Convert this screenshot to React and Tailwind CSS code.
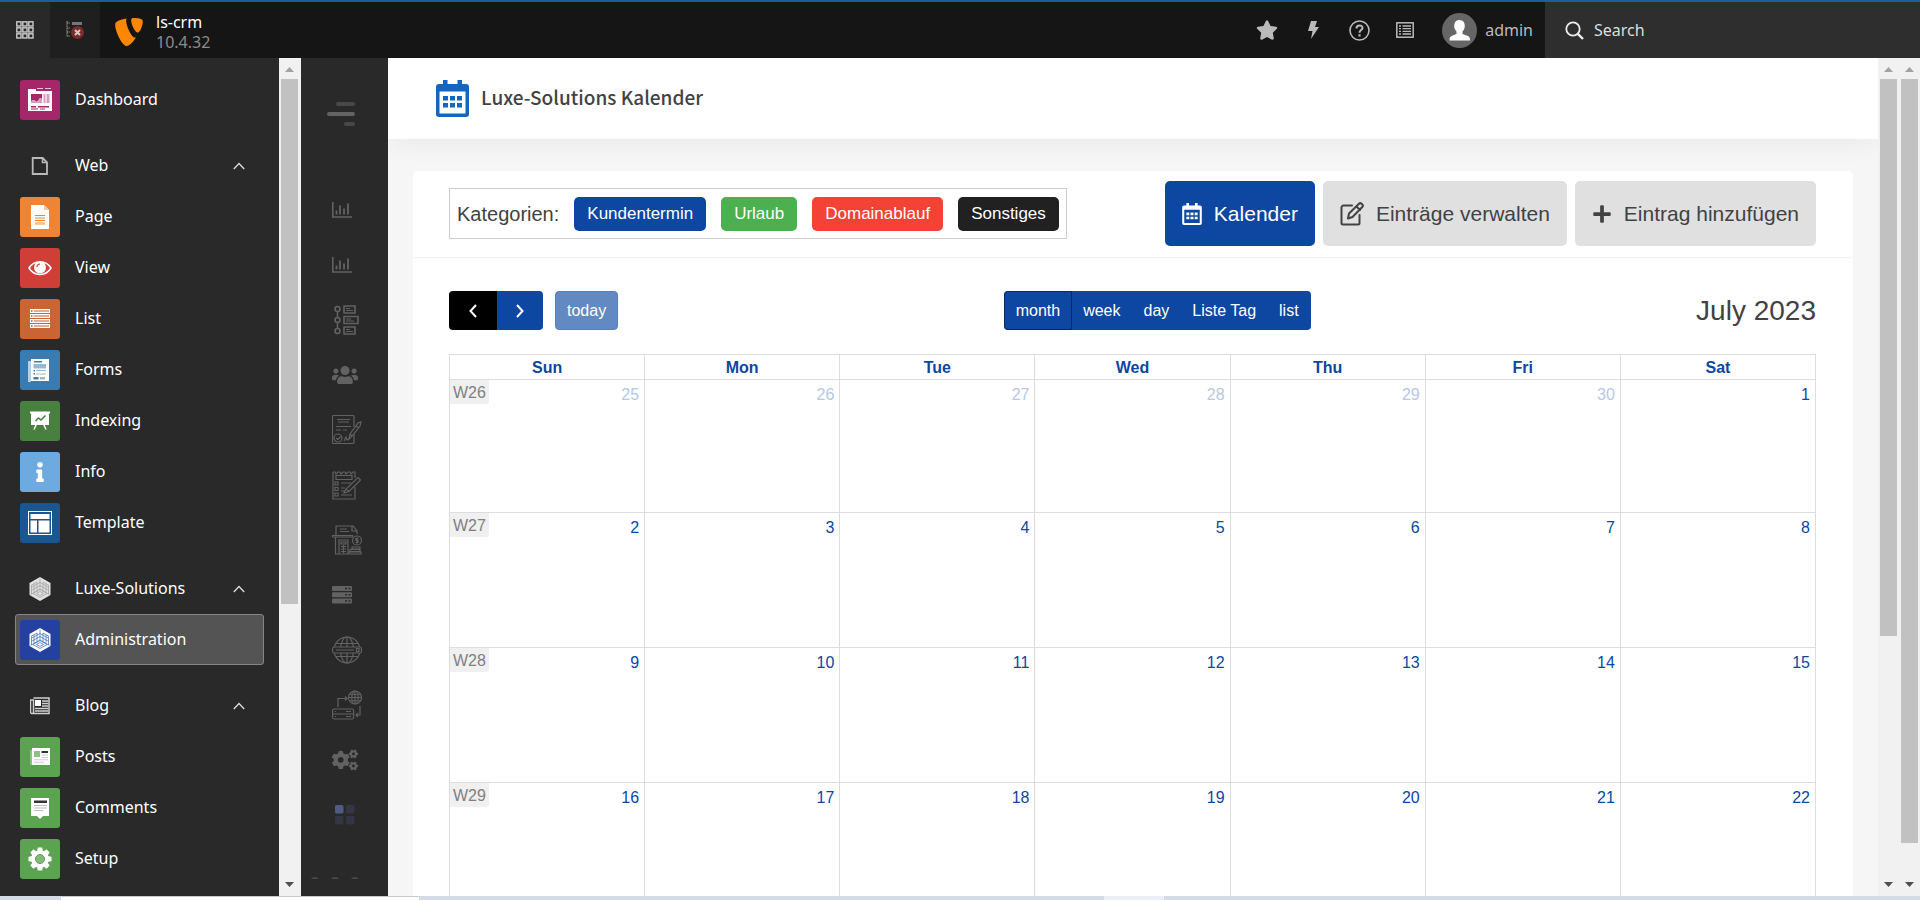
import React from "react";
import { SiTypo3 } from "react-icons/si";
import { FaUsers, FaCogs, FaStar, FaPlus, FaInfo } from "react-icons/fa";

const Tile = ({ className, children }) => (
  <span className={"flex size-10 shrink-0 items-center justify-center rounded-[3px] " + className}>{children}</span>
);

const S = ({ children, size = "size-6", box = "0 0 24 24" }) => (
  <svg className={size} viewBox={box} fill="none" aria-hidden="true">{children}</svg>
);

function DashboardIcon() {
  return (
    <S>
      <path d="M0 1h8v2h16v20H0z" fill="#fff" />
      <path d="M9 0h6v1H9zM17 0h6v1h-6z" fill="#e6bfd8" />
      <path d="M3 6h11v5l-2-1-3 4-3-2-3 1z" fill="#a4276a" />
      <path d="M3 13l3-1 3 2 3-4 2 1v4H3zM15.500 6h2v9h-2zM18.500 6h3v9h-3z" fill="#d79cc0" />
      <path d="M3 18h5v1.500H3zM10 18h11v1.500H10zM3 20.500h7v1H3zM12 20.500h5v1h-5z" fill="#a4276a" />
    </S>
  );
}
function WebIcon() {
  return (
    <S size="size-[18px]" box="0 0 18 18">
      <path d="M1.700 1h10l4.300 4.300V17H1.700z" stroke="#b9b9b9" strokeWidth="1.800" />
      <path d="M11.500 1v4.500H16" stroke="#b9b9b9" strokeWidth="1.500" />
    </S>
  );
}
function PageIcon() {
  return (
    <S>
      <path d="M3 0h13l5 5v19H3z" fill="#fff" />
      <path d="M16 0v5h5z" fill="#f8c795" />
      <path d="M7 10.500h10M7 13h10M7 15.500h10M7 18h10" stroke="#ee8434" strokeWidth="1.100" />
      <path d="M7 19.500h10" stroke="#f8c795" />
    </S>
  );
}
function ViewIcon() {
  return (
    <S>
      <path d="M1 12C6 3.500 18 3.500 23 12 18 20.500 6 20.500 1 12z" stroke="#fff" strokeWidth="1.500" />
      <circle cx="12" cy="11.500" r="6" fill="#fff" />
      <path d="M8.800 11A3.500 3.500 0 0 1 12 8" stroke="#cf3f38" strokeWidth="1.200" />
    </S>
  );
}
function ListIcon() {
  return (
    <S>
      {[2, 7, 12, 17].map((y) => (
        <g key={y}>
          <rect x="2" y={y} width="20" height="4" fill="#fff" />
          <rect x="3" y={y + 1.2} width="1.600" height="1.600" fill="#c96535" />
          <rect x="6" y={y + 1.2} width="15" height="1.600" fill="#dd9a78" />
        </g>
      ))}
    </S>
  );
}
function FormsIcon() {
  return (
    <S>
      <path d="M0 0h3v24H0z" fill="#b5d0e5" />
      <path d="M3 1h18v22H3z" fill="#fff" />
      <path d="M0 0h3v3H0zM6 3h8v1.500H6zM5.500 12h1.500v1.500H5.500zM5.500 15h1.500v1.500H5.500zM5.500 19h5v2.500h-5z" fill="#3b7cb0" />
      <path d="M5.500 6H18v4.500H5.500zM8 12h10v1H8zM8 15.500h10v1H8zM12 19h5v2.500h-5z" fill="#94b9d7" />
    </S>
  );
}
function IndexingIcon() {
  return (
    <S>
      <path d="M2 2.500h20v2h-1V16H3V4.500H2z" fill="#fff" />
      <path d="M7.500 12l3-3 2.500 2 4.500-4.500" stroke="#47803f" strokeWidth="1.600" />
      <path d="M8 16l-2 4.500M16 16l2 4.500" stroke="#fff" strokeWidth="1.500" />
    </S>
  );
}
function TemplateIcon() {
  return (
    <S>
      <rect x="0.500" y="0.500" width="23" height="23" stroke="#fff" />
      <path d="M2.500 3h19v5h-19zM2.500 9.500h6.500v12H2.500zM10.500 9.500h11v12h-11z" fill="#fff" />
    </S>
  );
}
function CubeIcon({ fill, line }) {
  return (
    <S>
      <path d="M12 0l10.500 6v12L12 24 1.500 18V6z" fill={fill} />
      <path d="M12 12V1.500M12 12L2.500 17.500M12 12l9.500 5.500M9 13.500V5L3.500 8v9M6 15V7M15 13.500V5l5.500 3v9M18 15V7M5 16.500l7-4 7 4-7 4zM8.500 16.500l3.500-2 3.500 2-3.500 2zM4 10l8-4.500 8 4.500M4 13l8-4.500 8 4.500" stroke={line} strokeWidth="0.800" />
    </S>
  );
}
function NewsIcon({ line, accent, head }) {
  return (
    <S size="size-5" box="0 0 20 20">
      <path d="M0 3h2v15H0z" fill={accent} />
      <path d="M2 1h18v17H2z" fill="#fff" />
      <path d="M4 4h6v6H4z" fill={accent} />
      <path d="M11.500 4H18v2h-6.500z" fill={head} />
      <path d="M11.500 8H18M11.500 10.500H18M4 12.800h14M4 15.300h10" stroke={line} />
    </S>
  );
}
function BlogIcon() {
  return (
    <S size="size-5" box="0 0 20 20">
      <path d="M3.500 2h15.500v15.500H1.500l-1-1V4h3v13" stroke="#cfcfcf" strokeWidth="1.500" />
      <path d="M5 4h6v6H5z" fill="#fff" />
      <path d="M12 5h6M12 7.500h6M12 10h6M5 12.500h13M5 15h13" stroke="#cfcfcf" strokeWidth="1.400" />
    </S>
  );
}
function CommentsIcon() {
  return (
    <S>
      <path d="M3 2h18v18h-6l-3 3-3-3H3z" fill="#fff" />
      <path d="M6 4.500h13v2.500H6z" fill="#333" />
      <path d="M6 9.500h13M6 12h13M6 14.500h9" stroke="#bbb" />
    </S>
  );
}
function GearIcon() {
  return (
    <S>
      <g fill="#fff">
        <circle cx="12" cy="12" r="8.800" />
        {[0, 45, 90, 135, 180, 225, 270, 315].map((a) => (
          <path key={a} d="M9.800 0.500h4.400l.8 4.500H9z" transform={`rotate(${a} 12 12)`} />
        ))}
      </g>
      <circle cx="12" cy="12" r="4.500" fill="#82b878" stroke="#5f9a58" />
    </S>
  );
}

const groups = [
  { items: [{ label: "Dashboard", bg: "bg-[#a4276a]", icon: <DashboardIcon /> }] },
  {
    title: "Web", icon: <WebIcon />,
    items: [
      { label: "Page", bg: "bg-[#ee8434]", icon: <PageIcon /> },
      { label: "View", bg: "bg-[#cf3f38]", icon: <ViewIcon /> },
      { label: "List", bg: "bg-[#c96535]", icon: <ListIcon /> },
      { label: "Forms", bg: "bg-[#3b7cb0]", icon: <FormsIcon /> },
      { label: "Indexing", bg: "bg-[#47803f]", icon: <IndexingIcon /> },
      { label: "Info", bg: "bg-[#6daae0]", icon: <FaInfo className="size-5 text-white" /> },
      { label: "Template", bg: "bg-[#1a568f]", icon: <TemplateIcon /> },
    ],
  },
  {
    title: "Luxe-Solutions", icon: <CubeIcon fill="#e2e2e2" line="#a2a2a2" />,
    items: [{ label: "Administration", bg: "bg-[#2541a0]", icon: <CubeIcon fill="#fff" line="#4a78bd" />, active: true }],
  },
  {
    title: "Blog", icon: <BlogIcon />,
    items: [
      { label: "Posts", bg: "bg-[#5ba350]", icon: <NewsIcon line="#ccc" accent="#8cc084" head="#333" /> },
      { label: "Comments", bg: "bg-[#5ba350]", icon: <CommentsIcon /> },
      { label: "Setup", bg: "bg-[#5ba350]", icon: <GearIcon /> },
    ],
  },
];

function Sidebar() {
  return (
    <nav aria-label="Modules" className="flex w-[279px] shrink-0 flex-col gap-[15px] overflow-hidden pt-4 pr-[15px] pl-[15px] text-base text-white">
      {groups.map((g, i) => (
        <div key={i} className="flex flex-col">
          {g.title && (
            <button type="button" className="flex h-[51px] items-center pr-[19px] pl-[5px] text-left">
              <span className="flex w-10 justify-center">{g.icon}</span>
              <span className="flex-1 pb-0.5 pl-[15px]">{g.title}</span>
              <svg className="h-2 w-3" viewBox="0 0 12 8" fill="none" aria-hidden="true">
                <path d="M.8 7L6 1.500 11.200 7" stroke="#ddd" strokeWidth="1.300" />
              </svg>
            </button>
          )}
          {g.items.map((it) => (
            <a
              key={it.label}
              href="#"
              className={
                "flex h-[51px] items-center gap-[15px] rounded-[3px] border px-1 " +
                (it.active ? "border-[#858585] bg-[#545454]" : "border-transparent")
              }
            >
              <Tile className={it.bg}>{it.icon}</Tile>
              <span className="pb-0.5">{it.label}</span>
            </a>
          ))}
        </div>
      ))}
    </nav>
  );
}

function Scrollbar({ thumb, width = "w-[21px]" }) {
  return (
    <div className={"flex shrink-0 flex-col bg-[#f1f1f1] pl-0.5 " + width} aria-hidden="true">
      <svg className="h-[21px] w-[17px] shrink-0" viewBox="0 0 17 21"><path d="M4 14l4.500-5 4.500 5z" fill="#a2a2a2" /></svg>
      <div className="flex w-[17px] flex-1 flex-col">
        <div className={"bg-[#c1c1c1] " + thumb} />
      </div>
      <svg className="h-[21px] w-[17px] shrink-0" viewBox="0 0 17 21"><path d="M4 7l4.500 5L13 7z" fill="#505050" /></svg>
    </div>
  );
}

const R = ({ children }) => (
  <svg className="size-[30px]" viewBox="0 0 30 30" fill="none" stroke="currentColor" strokeWidth="1.200" aria-hidden="true">{children}</svg>
);
const ChartIcon = () => (
  <svg className="h-4 w-5" viewBox="0 0 20 16" fill="none" stroke="currentColor" aria-hidden="true">
    <path d="M.8 0v15H20" strokeWidth="1.600" />
    <path d="M4.500 12.500V8.500M8 12.500v-9M12 12.500V6.500M16 12.500V1.500" strokeWidth="1.800" />
  </svg>
);
const Globe = ({ cx, cy, r }) => (
  <g>
    <circle cx={cx} cy={cy} r={r} />
    <ellipse cx={cx} cy={cy} rx={r * 0.5} ry={r} />
    <path d={`M${cx} ${cy - r}v${2 * r}M${cx - r} ${cy}h${2 * r}M${cx - r * 0.85} ${cy - r / 2}h${r * 1.7}M${cx - r * 0.85} ${cy + r / 2}h${r * 1.7}`} />
  </g>
);
const rail = [
  ["Statistik", <ChartIcon />],
  ["Auswertung", <ChartIcon />],
  ["Projekte", (
    <R>
      <g strokeWidth="1.600">
        <circle cx="5.500" cy="4" r="2.500" /><circle cx="5.500" cy="15" r="2.500" /><circle cx="5.500" cy="26" r="2.500" />
        <path d="M5.500 6.500v6M5.500 17.500v6M12 1h11v7H12zM12 11.500h14v7H12zM12 22h11v7H12z" />
      </g>
      <path d="M14 3.500h4M14 5.500h7M14 14h5M14 16h8M14 24.500h4M14 26.500h7" />
    </R>
  )],
  ["Kunden", <FaUsers className="h-6 w-[26px]" />],
  ["Verträge", (
    <R>
      <path d="M22 19v8.500a1 1 0 0 1-1 1H1.500a1 1 0 0 1-1-1v-26a1 1 0 0 1 1-1H21a1 1 0 0 1 1 1V12" />
      <path d="M5 4.500h13M6 7h11M4 11.500h15M4 15h5M11 15h4M12 26l2-4 1 3 2-1" />
      <circle cx="6" cy="23" r="4" /><path d="M4 23l2 1.500 2.500-3M17 24l1-5 8-11 3-1-1 4-8 10zM18 19l2 2M24 11l3 2" />
    </R>
  )],
  ["Notizen", (
    <R>
      <path d="M1 2h2l1 2 2-2h2l1 2 2-2h2l1 2 2-2h2l1 2 2-2h2v6M23 17v12H1V2M4 5.500h16v4H4z" />
      <path d="M3 12h3v3H3zM3 17.500h3v3H3zM3 23h3v3H3zM9 13h10M9 18h4M9 21h4M9 25h11" />
      <path d="M12 23l2-4L26 7.500l2.500 2.500L17 21.500zM14 19l3 2.500" />
    </R>
  )],
  ["Rechnungen", (
    <R>
      <path d="M4 10V1h17l4 5v3M20 1v5h5M8 4h7M8 6.500h9M.5 10.500h20v1.500H.5zM3.500 12v17H16M7 29V15h9v14M9 17h5v2H9zM9 21.500h5M9 24h5M9 26.500h5M11.500 20v8" />
      <circle cx="25" cy="15.500" r="4.500" /><path d="M26.500 13.500h-2.500v2h2v2h-2.500M25 12.500v6M20 22h8v2h-8zM18 24.500h10v2H18zM17 27h12v2H17z" />
    </R>
  )],
  ["Server", (
    <svg className="h-[18px] w-5" viewBox="0 0 20 18" aria-hidden="true">
      {[0, 6.3, 12.6].map((y) => (
        <g key={y}><rect y={y} width="20" height="5" rx="1" fill="currentColor" /><path d={`M13 ${y + 2.5}h2M16.500 ${y + 2.5}h2`} stroke="#292929" strokeWidth="1.500" /></g>
      ))}
    </svg>
  )],
  ["Domains", (
    <R>
      <Globe cx={15} cy={15} r={13} />
      <rect x="0.600" y="12" width="28.800" height="6" rx="1.500" fill="#292929" /><path d="M4 15h18M24.500 13.500h2.500v3h-2.500z" />
    </R>
  )],
  ["Hosting", (
    <R>
      <Globe cx={23} cy={7.5} r={6.5} />
      <path d="M6 17V8.500h9M13 6.500l2 2-2 2M28 16v9h-4M26 23l-2 2 2 2" />
      <rect x="0.600" y="19" width="21" height="10" rx="1.500" /><path d="M.6 24h21M3 21.500h1M3 26.500h1M14 21.500h5M14 26.500h5" />
    </R>
  )],
  ["Einstellungen", <FaCogs className="h-6 w-[26px]" />],
  ["Module", (
    <svg className="ml-[3px] size-5" viewBox="0 0 20 20" aria-hidden="true">
      <rect width="8.500" height="8.500" rx="1.500" fill="#4f5b85" /><rect x="11" width="8.500" height="8.500" rx="1.500" fill="#343644" />
      <rect y="11" width="8.500" height="8.500" rx="1.500" fill="#343644" /><rect x="11" y="11" width="8.500" height="8.500" rx="1.500" fill="#343644" />
    </svg>
  )],
];

function Rail() {
  return (
    <aside className="flex w-[87px] shrink-0 flex-col overflow-hidden bg-[#292929] text-[#626262]">
      <button type="button" aria-label="Menü" className="mt-11 mr-[33px] flex h-6 shrink-0 flex-col items-end justify-between self-end">
        <span className="h-1 w-[19px] rounded-full bg-[#484848]" />
        <span className="h-1 w-7 rounded-full bg-[#636363]" />
        <span className="h-1 w-[11px] rounded-full bg-[#484848]" />
      </button>
      <nav aria-label="CRM" className="mt-14 flex flex-col pl-[31px]">
        {rail.map(([name, icon]) => (
          <a key={name} href="#" aria-label={name} className="flex h-[55px] shrink-0 items-center">{icon}</a>
        ))}
      </nav>
      <svg className="mt-[35px] ml-2 h-0.5 w-[52px] shrink-0" viewBox="0 0 52 2" aria-hidden="true">
        <g fill="#484848"><circle cx="6" cy="5" r="5" /><circle cx="26" cy="5" r="5" /><circle cx="46" cy="5" r="5" /></g>
      </svg>
    </aside>
  );
}

function CalendarIcon({ className }) {
  return (
    <svg className={className} viewBox="0 0 33 37" aria-hidden="true">
      <path fill="currentColor" fillRule="evenodd" d="M7 0h4.500v4h10V0H26v4h4a3 3 0 0 1 3 3v27a3 3 0 0 1-3 3H3a3 3 0 0 1-3-3V7a3 3 0 0 1 3-3h4zM3.500 11.500v22h26v-22z" />
      <path fill="currentColor" d="M7 16h5v4.500H7zM14 16h5v4.500h-5zM21 16h5v4.500h-5zM7 23h5v4.500H7zM14 23h5v4.500h-5zM21 23h5v4.500h-5z" />
    </svg>
  );
}
function EditIcon() {
  return (
    <svg className="size-6" viewBox="0 0 24 24" fill="none" stroke="currentColor" strokeWidth="2" strokeLinejoin="round" strokeLinecap="round" aria-hidden="true">
      <path d="M12 3.500H3.500a2 2 0 0 0-2 2V21a1.500 1.500 0 0 0 1.500 1.500h15a1.500 1.500 0 0 0 1.500-1.500v-8" />
      <path d="M8 16.500l1-5L19 1.700a1.800 1.800 0 0 1 2.500 0l.8.8a1.800 1.800 0 0 1 0 2.500L12.500 15zM16.500 4.500l3.500 3.500" />
    </svg>
  );
}

function TopBar() {
  return (
    <header className="flex h-[58px] shrink-0 border-t-2 border-[#1f5aa3] bg-[#151515] text-base text-white">
      <button type="button" aria-label="Toggle menu" className="flex w-[50px] items-center justify-center bg-[#292929]">
        <svg className="size-[18px]" viewBox="0 0 18 18" fill="none" stroke="#ccc" strokeWidth="1.400" aria-hidden="true">
          {[0.8, 6.8, 12.8].map((y) => [0.8, 6.8, 12.8].map((x) => <rect key={x + "-" + y} x={x} y={y} width="4.200" height="4.200" />))}
        </svg>
      </button>
      <button type="button" aria-label="Toggle tree" className="flex w-[50px] items-center justify-center bg-[#1f1f1f]">
        <svg className="size-[18px]" viewBox="0 0 18 18" fill="none" aria-hidden="true">
          <path d="M1 0v16M1 2h3M1 7h3M1 11h3M1 15h3" stroke="#777" strokeWidth="1.500" strokeDasharray="1.500 .8" />
          <path d="M6 1h10v3H6z" fill="#777" />
          <circle cx="11.500" cy="11.500" r="6.500" fill="#7d2a2a" />
          <path d="M9 9l5 5M14 9l-5 5" stroke="#ccc" strokeWidth="2" />
        </svg>
      </button>
      <a href="#" className="flex items-center gap-[13px] pt-[3px] pl-[15px] leading-5">
        <SiTypo3 className="size-7 text-[#ff8700]" />
        <span className="flex flex-col"><span>ls-crm</span><span className="text-[#8c8c8c]">10.4.32</span></span>
      </a>
      <div className="ml-auto flex items-center text-[#bababa]">
        <button type="button" aria-label="Bookmarks" className="flex w-[46px] justify-center"><FaStar className="size-[22px]" /></button>
        <button type="button" aria-label="Clear cache" className="flex w-[46px] justify-center">
          <svg className="h-[18px] w-3" viewBox="0 0 12 18" aria-hidden="true"><path d="M4 0h6L8 6h4L4 18l1.500-8H1z" fill="currentColor" /></svg>
        </button>
        <button type="button" aria-label="Help" className="flex w-[46px] justify-center">
          <svg className="size-[21px]" viewBox="0 0 21 21" fill="none" stroke="currentColor" strokeWidth="1.600" aria-hidden="true">
            <circle cx="10.500" cy="10.500" r="9.500" /><path d="M7.500 8.500c0-4 6-4 6-.5 0 2-3 2.200-3 4.700" strokeWidth="2" /><path d="M10.500 14.300v2.200" strokeWidth="2.200" />
          </svg>
        </button>
        <button type="button" aria-label="System information" className="flex w-[46px] justify-center">
          <svg className="h-4 w-[18px]" viewBox="0 0 18 16" fill="none" stroke="currentColor" strokeWidth="1.500" aria-hidden="true">
            <rect x="0.800" y="0.800" width="16.400" height="14.400" /><path d="M3 4h2M3 6.700h2M3 9.400h2M3 12h2M6.500 4H15M6.500 6.700H15M6.500 9.400H15M6.500 12H15" strokeWidth="1.300" />
          </svg>
        </button>
        <button type="button" className="flex items-center gap-2 pr-3 pl-[14px]">
          <svg className="size-[35px]" viewBox="0 0 35 35" aria-hidden="true">
            <circle cx="17.500" cy="17.500" r="17.500" fill="#666" />
            <path d="M17.500 7c4 0 5.300 3 5.300 6 0 2.500-1.300 4.500-2.300 5.500V21l5.500 2c1.500.7 2 2 2 4.500H7.500c0-2.500.5-3.800 2-4.500l5-2v-2.500c-1-1-2.300-3-2.300-5.500 0-3 1.300-6 5.300-6z" fill="#fff" />
          </svg>
          admin
        </button>
      </div>
      <label className="flex w-[375px] items-center gap-2.5 bg-[#2e2e2e] pl-5">
        <svg className="size-[19px] shrink-0" viewBox="0 0 19 19" fill="none" stroke="#eee" strokeWidth="1.800" aria-hidden="true">
          <circle cx="8" cy="8" r="6.700" /><path d="M12.800 12.800l5.200 5.200" strokeWidth="2.400" />
        </svg>
        <input type="search" aria-label="Search" placeholder="Search" className="min-w-0 flex-1 bg-transparent outline-none placeholder:text-[#ddd]" />
      </label>
    </header>
  );
}

const categories = [
  ["Kundentermin", "bg-[#0d47a1]"],
  ["Urlaub", "bg-[#4caf50]"],
  ["Domainablauf", "bg-[#f44336]"],
  ["Sonstiges", "bg-[#212121]"],
];
const days = ["Sun", "Mon", "Tue", "Wed", "Thu", "Fri", "Sat"];
const weeks = [
  ["W26", [25, 26, 27, 28, 29, 30, 1]],
  ["W27", [2, 3, 4, 5, 6, 7, 8]],
  ["W28", [9, 10, 11, 12, 13, 14, 15]],
  ["W29", [16, 17, 18, 19, 20, 21, 22]],
];
const actionBase = "flex h-[65px] items-center gap-3 rounded-[5px] pr-[17px] pl-[17px] text-[21px] whitespace-nowrap ";

function Calendar() {
  return (
    <main className="flex min-w-0 flex-1 flex-col overflow-hidden bg-[#f6f6f7] font-['Liberation_Sans',Arial,sans-serif] text-[#424242]">
      <div className="flex h-[81px] shrink-0 items-center gap-3 bg-white pl-12 shadow-[0_4px_24px_rgba(0,0,0,0.06)]">
        <CalendarIcon className="h-[37px] w-[33px] text-[#1565c0]" />
        <h1 className="pb-[3px] font-['Noto_Sans_CJK_SC','Noto_Sans',sans-serif] text-[19px] font-medium">Luxe-Solutions Kalender</h1>
      </div>
      <section className="mx-[25px] mt-8 flex-1 rounded-t-[5px] bg-white">
        <div className="flex items-center justify-between border-b border-[#f2f2f2] pt-2.5 pr-[37px] pb-[11px] pl-9">
          <div className="flex h-[51px] items-center border border-[#ccc] pr-[7px] pl-[7px]">
            <span className="mr-[15px] text-xl">Kategorien:</span>
            <div className="flex gap-[15px]">
              {categories.map(([n, c]) => (
                <span key={n} className={"flex h-[34px] items-center rounded-[5px] px-[13px] text-[17px] text-white " + c}>{n}</span>
              ))}
            </div>
          </div>
          <div className="flex gap-2">
            <button type="button" className={actionBase + "bg-[#0d47a1] text-white"}>
              <CalendarIcon className="h-[22px] w-5" />Kalender
            </button>
            <button type="button" className={actionBase + "bg-[#e0e0e0]"}><EditIcon />Einträge verwalten</button>
            <button type="button" className={actionBase + "bg-[#e0e0e0]"}><FaPlus className="size-5" />Eintrag hinzufügen</button>
          </div>
        </div>
        <div className="pt-[33px] pr-[37px] pl-9">
          <div className="flex items-center justify-between text-base text-white">
            <div className="flex gap-3">
              <div className="flex">
                <button type="button" aria-label="prev" className="flex h-[39px] w-12 items-center justify-center rounded-l-[4px] bg-black">
                  <svg className="h-[14px] w-2" viewBox="0 0 8 14" fill="none" aria-hidden="true"><path d="M7 1L1.500 7 7 13" stroke="#fff" strokeWidth="2" /></svg>
                </button>
                <button type="button" aria-label="next" className="flex h-[39px] w-[46px] items-center justify-center rounded-r-[4px] bg-[#0d47a1]">
                  <svg className="h-[14px] w-2" viewBox="0 0 8 14" fill="none" aria-hidden="true"><path d="M1 1l5.500 6L1 13" stroke="#fff" strokeWidth="2" /></svg>
                </button>
              </div>
              <button type="button" disabled className="h-[39px] rounded-[4px] border border-[#5a7fb5] bg-[#6389c2] px-[11px]">today</button>
            </div>
            <div className="flex rounded-[4px] bg-[#0d47a1]">
              {["month", "week", "day", "Liste Tag", "list"].map((v) => (
                <button key={v} type="button" className={"-ml-px h-[39px] border px-[11px] first:ml-0 " + (v === "month" ? "rounded-l-[4px] border-[#0a2a5c]" : "border-transparent")}>{v}</button>
              ))}
            </div>
            <h2 className="text-right text-[28px] leading-[39px] text-[#424242]">July 2023</h2>
          </div>
          <table className="mt-6 w-full table-fixed border-collapse text-base text-[#0d47a1]">
            <thead>
              <tr>
                {days.map((d) => <th key={d} scope="col" className="h-[25px] border border-[#ddd] p-0 pt-px leading-[23px] font-bold">{d}</th>)}
              </tr>
            </thead>
            <tbody>
              {weeks.map(([w, ds]) => (
                <tr key={w} className="h-[135px] align-top first:h-[133px]">
                  {ds.map((d, i) => (
                    <td key={d} className="border border-[#ddd] p-0">
                      <div className="flex items-start justify-between">
                        {i === 0 ? <span className="h-6 rounded-br-[3px] bg-[#f0f0f0] px-[3px] leading-[25px] text-[#808080]">{w}</span> : <span />}
                        <a href="#" className={"pt-[3px] pr-[5px] leading-6 " + (w === "W26" && d > 20 ? "text-[#b6c8e3]" : "")}>{d}</a>
                      </div>
                    </td>
                  ))}
                </tr>
              ))}
            </tbody>
          </table>
        </div>
      </section>
    </main>
  );
}

export default function App() {
  return (
    <div className="flex h-screen flex-col overflow-hidden bg-[#292929] font-['Noto_Sans',sans-serif]">
      <TopBar />
      <div className="flex min-h-0 flex-1">
        <Sidebar />
        <Scrollbar thumb="h-[66%]" width="w-[22px]" />
        <Rail />
        <Calendar />
        <Scrollbar thumb="h-[70%]" />
        <Scrollbar thumb="h-[96%]" />
      </div>
      <div className="flex h-1 shrink-0 bg-[#d3dbe6]">
        <div className="ml-[61px] w-[358px] border-t border-[#c8c8c8] bg-white" />
        <div className="ml-[685px] w-[60px] bg-[#eceff5]" />
      </div>
    </div>
  );
}
